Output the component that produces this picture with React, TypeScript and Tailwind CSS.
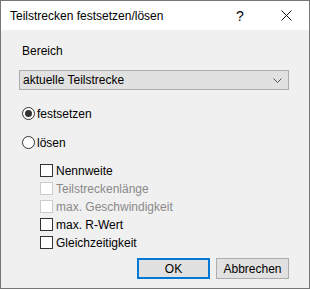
import { useState } from "react";

const options = [
  { label: "Nennweite", enabled: true },
  { label: "Teilstreckenlänge", enabled: false },
  { label: "max. Geschwindigkeit", enabled: false },
  { label: "max. R-Wert", enabled: true },
  { label: "Gleichzeitigkeit", enabled: true },
];

function Radio({ checked, label, onClick }: { checked: boolean; label: string; onClick: () => void }) {
  return (
    <button type="button" onClick={onClick} className="flex h-[13px] items-center gap-[2px] text-left">
      <span className="flex h-[13px] w-[13px] items-center justify-center rounded-full border border-[#333] bg-white">
        {checked && <span className="h-[7px] w-[7px] rounded-full bg-[#333]" />}
      </span>
      <span className="leading-none">{label}</span>
    </button>
  );
}

export default function App() {
  const [mode, setMode] = useState<"fix" | "free">("fix");

  return (
    <div className="flex h-[289px] w-[310px] flex-col border border-[#777] bg-[#f0f0f0] font-['Liberation_Sans',sans-serif] text-[12px] text-black">
      <div className="flex h-[29px] shrink-0 items-center bg-white pl-[9px]">
        <span className="flex-1 pt-[1px]">Teilstrecken festsetzen/lösen</span>
        <span className="w-[46px] pt-[1px] text-center text-[14px]">?</span>
        <span className="flex w-[46px] items-center justify-center">
          <svg width="11" height="11" viewBox="0 0 11 11" fill="none" stroke="#111" strokeWidth="1">
            <path d="M0.5 0.5 L10.5 10.5 M10.5 0.5 L0.5 10.5" />
          </svg>
        </span>
      </div>

      <div className="flex flex-1 flex-col px-[18px]">
        <div className="mt-[15px] pl-[3px] leading-none">Bereich</div>
        <div className="mt-[13px] flex h-[20px] w-[270px] items-center border border-[#adadad] bg-[#e1e1e1] pl-[3px] pr-[6px]">
          <span className="flex-1 leading-none">aktuelle Teilstrecke</span>
          <svg width="9" height="5" viewBox="0 0 9 5" fill="none" stroke="#555" strokeWidth="1">
            <path d="M0.5 0.5 L4.5 4.5 L8.5 0.5" />
          </svg>
        </div>

        <div className="mt-[17px] flex flex-col gap-[16px] pl-[3px]">
          <Radio checked={mode === "fix"} label="festsetzen" onClick={() => setMode("fix")} />
          <Radio checked={mode === "free"} label="lösen" onClick={() => setMode("free")} />
        </div>

        <div className="mt-[15px] flex flex-col gap-[5px] pl-[21px]">
          {options.map((o) => (
            <label key={o.label} className={`flex h-[13px] items-center gap-[3px] ${o.enabled ? "text-black" : "text-[#8a8a8a]"}`}>
              <span className={`h-[13px] w-[13px] border bg-white ${o.enabled ? "border-[#333]" : "border-[#ccc]"}`} />
              <span className="leading-none">{o.label}</span>
            </label>
          ))}
        </div>

        <div className="mt-auto mb-[9px] flex justify-end gap-[6px] pr-[2px]">
          <button className="h-[21px] w-[73px] border-2 border-[#0078d7] bg-[#e1e1e1] leading-none">OK</button>
          <button className="h-[21px] w-[73px] border border-[#adadad] bg-[#e1e1e1] leading-none">Abbrechen</button>
        </div>
      </div>
    </div>
  );
}
